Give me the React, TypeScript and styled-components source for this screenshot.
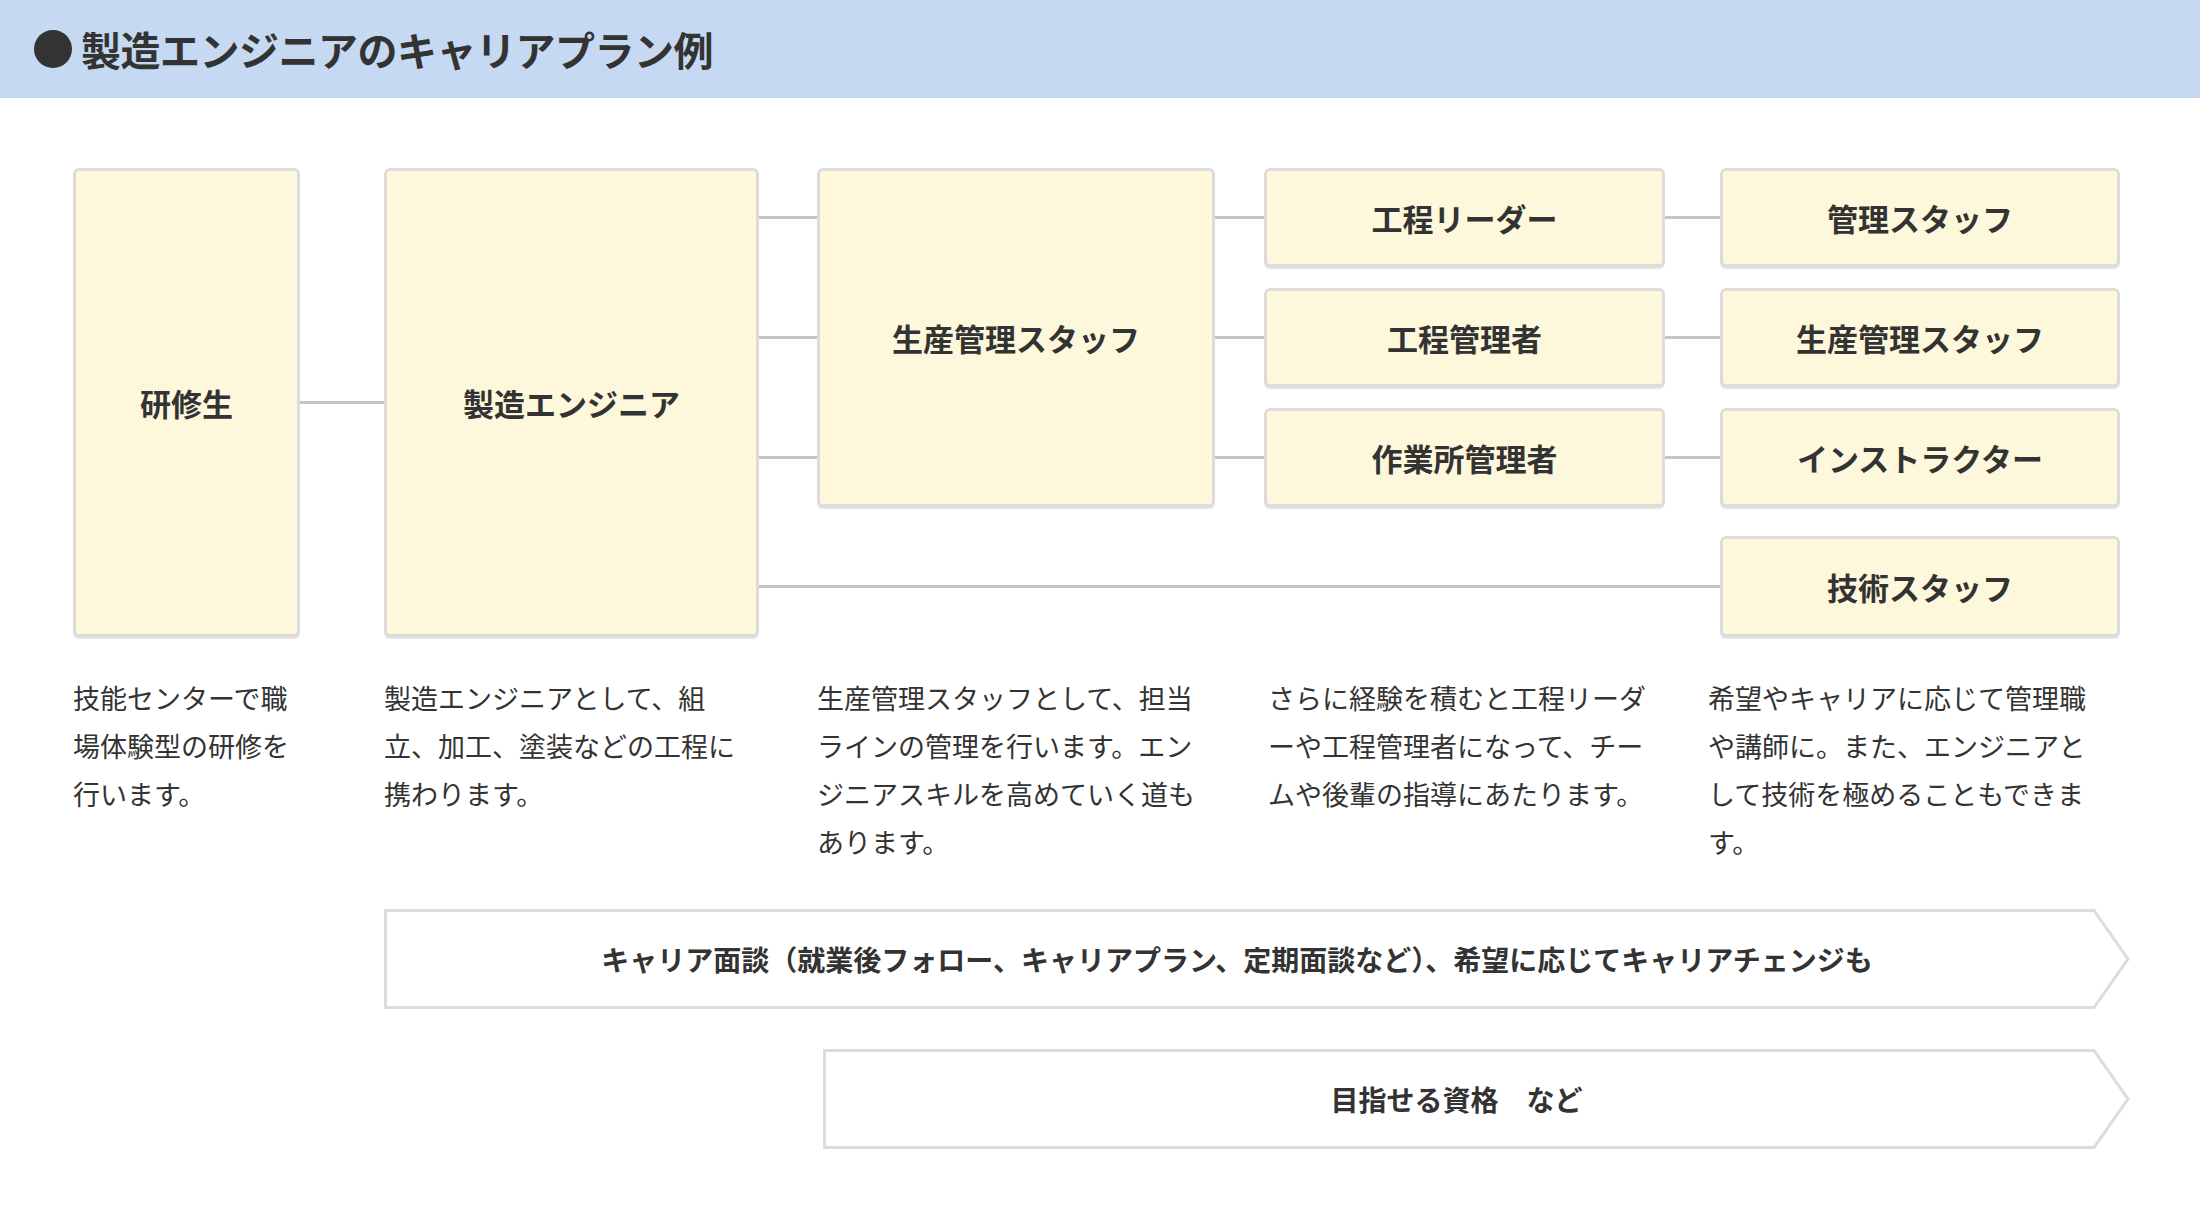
import React from 'react'
import styled, { createGlobalStyle } from 'styled-components'

const Global = createGlobalStyle`
  body {
    margin: 0;
    background: #fff;
    font-family: "Noto Sans CJK JP", "Noto Sans", sans-serif;
    color: #333;
  }
`

const Header = styled.header`
  height: 98px;
  background: #c5d9f2;
  display: flex;
  align-items: center;
  padding-left: 34px;
  gap: 9px;
`

const Dot = styled.span`
  width: 38px;
  height: 38px;
  border-radius: 50%;
  background: #333;
`

const Title = styled.h1`
  margin: 0;
  font-size: 40px;
  font-weight: 700;
  color: #333;
  letter-spacing: -0.5px;
`

const Body = styled.main`
  padding: 70px 0 60px 73px;
`

const Diagram = styled.div`
  display: grid;
  grid-template-columns: 227px 84px 375px 58px 398px 49px 401px 55px 400px;
  grid-template-rows: 99px 21px 99px 21px 99px 29px 101px;
`

const Box = styled.div<{ $col: number; $row: string }>`
  grid-column: ${p => p.$col};
  grid-row: ${p => p.$row};
  background: #fdf8db;
  border: 3px solid #dcdcdc;
  border-radius: 6px;
  box-shadow: 0 2px 0 #e4e4e4;
  display: flex;
  align-items: center;
  justify-content: center;
  font-size: 31px;
  font-weight: 700;
  color: #333;
`

const Line = styled.div<{ $col: string; $row: string }>`
  grid-column: ${p => p.$col};
  grid-row: ${p => p.$row};
  align-self: center;
  height: 3px;
  background: #c4c4c4;
`

const Descs = styled.div`
  display: grid;
  grid-template-columns: 227px 84px 375px 58px 398px 53px 397px 43px 396px;
  margin-top: 37px;
`

const Desc = styled.p<{ $col: number }>`
  grid-column: ${p => p.$col};
  margin: 0;
  font-size: 27px;
  line-height: 48px;
  color: #333;
`

const ArrowBox = styled.div<{ $left: number; $gap: number }>`
  position: relative;
  margin-left: ${p => p.$left}px;
  margin-top: ${p => p.$gap}px;
  width: ${p => 2130 - 73 - p.$left}px;
  height: 100px;
  display: flex;
  align-items: center;
  justify-content: center;
  padding-right: 40px;
  box-sizing: border-box;
  font-size: 28px;
  font-weight: 700;
  color: #333;
  span { position: relative; }
`

const ArrowShape = styled.svg`
  position: absolute;
  inset: 0;
  width: 100%;
  height: 100%;
`

function Arrow({ left, gap, children }: { left: number; gap: number; children: React.ReactNode }) {
  const w = 2130 - 73 - left
  return (
    <ArrowBox $left={left} $gap={gap}>
      <ArrowShape viewBox={`0 0 ${w} 100`} preserveAspectRatio="none">
        <polygon
          points={`1.5,1.5 ${w - 36},1.5 ${w - 2},50 ${w - 36},98.5 1.5,98.5`}
          fill="#fff"
          stroke="#dcdcdc"
          strokeWidth="3"
        />
      </ArrowShape>
      <span>{children}</span>
    </ArrowBox>
  )
}

export default function App() {
  return (
    <>
      <Global />
      <Header>
        <Dot />
        <Title>製造エンジニアのキャリアプラン例</Title>
      </Header>
      <Body>
        <Diagram>
          <Box $col={1} $row="1 / -1">研修生</Box>
          <Line $col="2" $row="1 / -1" />
          <Box $col={3} $row="1 / -1">製造エンジニア</Box>
          <Line $col="4" $row="1" />
          <Line $col="4" $row="3" />
          <Line $col="4" $row="5" />
          <Box $col={5} $row="1 / 6">生産管理スタッフ</Box>
          <Line $col="6" $row="1" />
          <Line $col="6" $row="3" />
          <Line $col="6" $row="5" />
          <Box $col={7} $row="1">工程リーダー</Box>
          <Box $col={7} $row="3">工程管理者</Box>
          <Box $col={7} $row="5">作業所管理者</Box>
          <Line $col="8" $row="1" />
          <Line $col="8" $row="3" />
          <Line $col="8" $row="5" />
          <Line $col="4 / 9" $row="7" />
          <Box $col={9} $row="1">管理スタッフ</Box>
          <Box $col={9} $row="3">生産管理スタッフ</Box>
          <Box $col={9} $row="5">インストラクター</Box>
          <Box $col={9} $row="7">技術スタッフ</Box>
        </Diagram>
        <Descs>
          <Desc $col={1}>技能センターで職場体験型の研修を行います。</Desc>
          <Desc $col={3}>製造エンジニアとして、組立、加工、塗装などの工程に携わります。</Desc>
          <Desc $col={5}>生産管理スタッフとして、担当ラインの管理を行います。エンジニアスキルを高めていく道もあります。</Desc>
          <Desc $col={7}>さらに経験を積むと工程リーダーや工程管理者になって、チームや後輩の指導にあたります。</Desc>
          <Desc $col={9}>希望やキャリアに応じて管理職や講師に。また、エンジニアとして技術を極めることもできます。</Desc>
        </Descs>
        <Arrow left={311} gap={43}>キャリア面談（就業後フォロー、キャリアプラン、定期面談など）、希望に応じてキャリアチェンジも</Arrow>
        <Arrow left={750} gap={40}>目指せる資格　など</Arrow>
      </Body>
    </>
  )
}
